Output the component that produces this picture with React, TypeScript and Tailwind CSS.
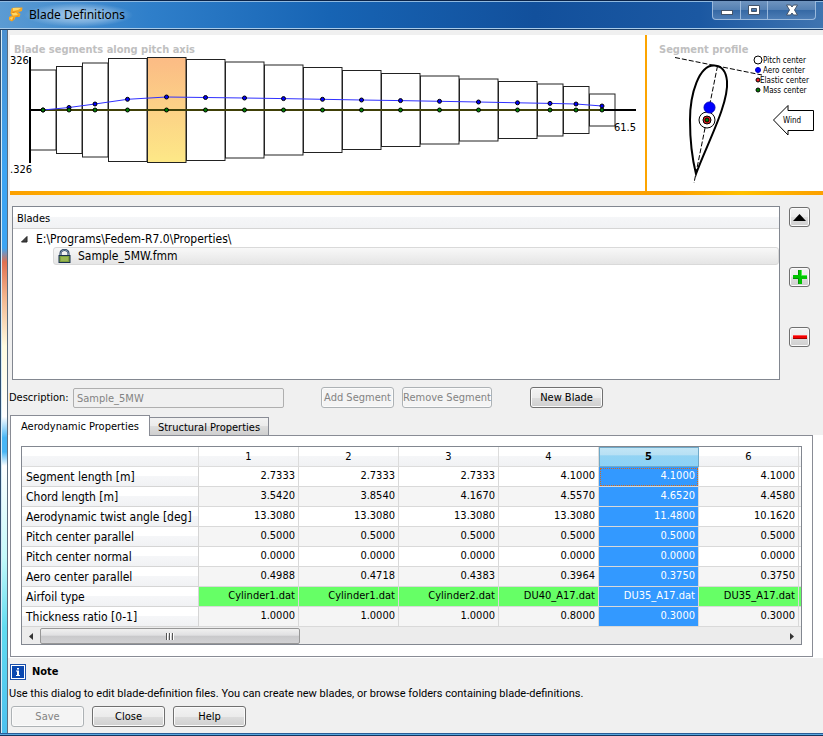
const segments: { x: number; w: number; top: number; bottom: number; aero: number }[] = [
  { x: 30, w: 26, top: 70, bottom: 150, aero: 110 },
  { x: 56, w: 26, top: 66.5, bottom: 153.5, aero: 107.5 },
  { x: 82, w: 26, top: 63, bottom: 157, aero: 104 },
  { x: 108, w: 39, top: 58.5, bottom: 161.5, aero: 99.3 },
  { x: 147, w: 39, top: 57.5, bottom: 162.5, aero: 97 },
  { x: 186, w: 39, top: 59.5, bottom: 160.5, aero: 97.5 },
  { x: 225, w: 39, top: 62, bottom: 158, aero: 98 },
  { x: 264, w: 39, top: 65, bottom: 155, aero: 98.6 },
  { x: 303, w: 39, top: 67.5, bottom: 152.5, aero: 99.3 },
  { x: 342, w: 39, top: 70.5, bottom: 149.5, aero: 100 },
  { x: 381, w: 39, top: 73.5, bottom: 146.5, aero: 100.6 },
  { x: 420, w: 39, top: 76, bottom: 144, aero: 101.3 },
  { x: 459, w: 39, top: 79, bottom: 141, aero: 102 },
  { x: 498, w: 39, top: 81.5, bottom: 138.5, aero: 102.8 },
  { x: 537, w: 26, top: 84, bottom: 136, aero: 103.4 },
  { x: 563, w: 26, top: 86.5, bottom: 133.5, aero: 104 },
  { x: 589, w: 26, top: 94, bottom: 126, aero: 106 },
];

const rows: { label: string; values: string[] }[] = [
  { label: "Segment length [m]", values: ["2.7333", "2.7333", "2.7333", "4.1000", "4.1000", "4.1000"] },
  { label: "Chord length [m]", values: ["3.5420", "3.8540", "4.1670", "4.5570", "4.6520", "4.4580"] },
  { label: "Aerodynamic twist angle [deg]", values: ["13.3080", "13.3080", "13.3080", "13.3080", "11.4800", "10.1620"] },
  { label: "Pitch center parallel", values: ["0.5000", "0.5000", "0.5000", "0.5000", "0.5000", "0.5000"] },
  { label: "Pitch center normal", values: ["0.0000", "0.0000", "0.0000", "0.0000", "0.0000", "0.0000"] },
  { label: "Aero center parallel", values: ["0.4988", "0.4718", "0.4383", "0.3964", "0.3750", "0.3750"] },
  { label: "Airfoil type", values: ["Cylinder1.dat", "Cylinder1.dat", "Cylinder2.dat", "DU40_A17.dat", "DU35_A17.dat", "DU35_A17.dat"] },
  { label: "Thickness ratio [0-1]", values: ["1.0000", "1.0000", "1.0000", "0.8000", "0.3000", "0.3000"] },
];

const buttonBase =
  "flex items-center justify-center rounded-[3px] border border-[#707070] bg-[linear-gradient(#f3f3f3,#ebebeb_50%,#dddddd_50%,#cfcfcf)] shadow-[inset_0_0_0_1px_#fbfbfb]";
const buttonDisabled =
  "flex items-center justify-center rounded-[3px] border border-[#adb2b5] bg-[#f4f4f4] text-[#838383] shadow-[inset_0_0_0_1px_#fbfbfb]";
const headFill = "bg-[linear-gradient(#ffffff,#ffffff_45%,#f5f6f8_50%,#f1f2f4)]";

function TitleBar() {
  return (
    <header className="flex h-[30px] items-start border-b border-[#1d3f66] border-t border-t-[#0a2348] bg-[linear-gradient(90deg,#5b9bd3,#2f7fca_18%,#1764b4_40%,#12509c_65%,#1b58a2_85%,#3f74b0)] shadow-[inset_0_1px_0_#8fb9e0,inset_0_-1px_0_#a9cbe9]">
      <svg viewBox="0 0 16 16" className="mt-[5px] ml-2 size-4" aria-hidden="true">
        <path d="M4 2L8 1.500L14.500 1.500L14 5L11 6L9.500 5.500L12.500 8L11.500 11L7.500 11L6.500 13.500L4 15.500L1 14L1 11L4 9.500L2.500 7.500L3 4Z" fill="#f5a623" />
        <path d="M5 2L13 2L10 4L5 5ZM3.500 7L8 6.500L10 9L5 9.500ZM1.500 12L5 11L4 14Z" fill="#ffd766" />
        <path d="M4 6L9 5.500L5 7ZM7 10.500L11 9.500L10 10.500ZM4 15L6 13V11.500Z" fill="#d97f10" />
      </svg>
      <h1 className="mt-[2px] bg-[radial-gradient(closest-side,#a9cdec,#8bb9e3c0_60%,#8bb9e300)] pr-2 pl-[5px] font-['Noto_Sans',sans-serif] text-[12px] leading-[24px]">
        Blade Definitions
      </h1>
      <div className="mr-[7px] ml-auto flex h-[19px] rounded-b-[4px] border border-t-0 border-[#9ab9dc] bg-[linear-gradient(#6f94bf,#5480b3_50%,#3568a4_50%,#4d7db5)]">
        <button aria-label="Minimize" className="flex w-7 items-center justify-center border-r border-[#9ab9dc]">
          <svg width="14" height="14" viewBox="0 0 14 14"><rect x="1.500" y="7.500" width="11" height="4" fill="#fff" stroke="#44546a" /></svg>
        </button>
        <button aria-label="Maximize" className="flex w-[27px] items-center justify-center border-r border-[#9ab9dc]">
          <svg width="14" height="12" viewBox="0 0 14 12"><path d="M1.500 1.500h11v9h-11z M4.500 4.500h5v3h-5z" fillRule="evenodd" fill="#fff" stroke="#44546a" /></svg>
        </button>
        <button aria-label="Close window" className="flex w-[47px] items-center justify-center">
          <svg width="14" height="12" viewBox="0 0 14 12"><path d="M1.500 1h4L7 3l1.500-2h4L9.500 6l3 5H8.500L7 9l-1.500 2h-4L4.500 6z" fill="#fff" stroke="#44546a" /></svg>
        </button>
      </div>
    </header>
  );
}

function BladeChart() {
  return (
    <svg width="635" height="156" viewBox="10 35 635 156" className="block" role="img" aria-label="Blade segments along pitch axis">
      <defs>
        <linearGradient id="selected" x1="0" y1="0" x2="0" y2="1">
          <stop offset="0" stopColor="#fbbb85" />
          <stop offset="1" stopColor="#fde887" />
        </linearGradient>
      </defs>
      <text x="14" y="53" fontSize="11" fontWeight="bold" fill="#c0c0c0">Blade segments along pitch axis</text>
      {segments.map((s, i) => (
        <rect key={s.x} x={s.x + 0.5} y={s.top} width={s.w - 0.5} height={s.bottom - s.top} fill={i === 4 ? "url(#selected)" : "none"} stroke="#222" />
      ))}
      <path d="M30 57V163" stroke="#000" strokeWidth="2" />
      <path d="M30 110H636" stroke="#000" strokeWidth="2" />
      <path d="M43 110H602" stroke="#404008" strokeWidth="2" />
      <polyline fill="none" stroke="#3030ff" points={segments.map((s) => `${s.x + s.w / 2},${s.aero}`).join(" ")} />
      {segments.map((s) => (
        <g key={s.x} stroke="#000">
          <circle cx={s.x + s.w / 2} cy={s.aero} r="2" fill="#0000ff" />
          <circle cx={s.x + s.w / 2} cy="110" r="2" fill="#008000" />
        </g>
      ))}
      <text x="10" y="64" fontSize="11">326</text>
      <text x="10" y="173" fontSize="11">.326</text>
      <text x="614" y="131" fontSize="11">61.5</text>
    </svg>
  );
}

function ProfileChart() {
  return (
    <svg width="176" height="156" viewBox="647 35 176 156" className="block" role="img" aria-label="Segment profile">
      <text x="659" y="53" fontSize="11" fontWeight="bold" fill="#c0c0c0">Segment profile</text>
      <g fill="none" stroke="#000">
        <path d="M675 57.500L762 75M717.500 66L694 183" strokeDasharray="5 2" />
        <path d="M714.500 65.500C699 64.500 690 94 690 120C690 139 692 158 696 174C706 146 729 104 727 81C726 71 722 66 714.500 65.500Z" strokeWidth="2" />
        <circle cx="707" cy="120" r="8" fill="#fff" />
        <circle cx="709.500" cy="107.500" r="5.500" fill="#0000ff" stroke="#0000c0" />
        <circle cx="707" cy="120" r="4" fill="#f02020" />
        <circle cx="707" cy="120" r="2" fill="#008000" />
        <circle cx="758" cy="60" r="4" fill="#fff" />
        <circle cx="758" cy="70" r="2.500" fill="#0000ff" stroke="#0000c0" />
        <circle cx="758" cy="80" r="2" fill="#f02020" />
        <circle cx="758" cy="90" r="2" fill="#008000" />
        <path d="M773.500 120L788 105.500V110.500H813.500V130.500H788V135Z" />
      </g>
      <g fontSize="8">
        <text x="763" y="63">Pitch center</text>
        <text x="763" y="73">Aero center</text>
        <text x="760" y="83">Elastic center</text>
        <text x="763" y="93">Mass center</text>
        <text x="783" y="123">Wind</text>
      </g>
    </svg>
  );
}

function BladeList() {
  return (
    <section className="flex gap-[9px] pt-[11px] pr-[13px] pl-1 text-[12px]">
      <div className="h-[174px] flex-1 border border-[#828790] bg-white">
        <h2 className={`h-[22px] border-b border-[#d5d5d5] px-1 text-[11px] leading-[24px] ${headFill}`}>Blades</h2>
        <ul role="tree" aria-label="Blades">
          <li role="treeitem" aria-expanded="true">
            <div className="flex h-[18px] items-center pt-0.5">
              <svg width="7" height="7" viewBox="0 0 7 7" className="mr-2 ml-2" aria-hidden="true"><path d="M6 0.500V6H0.500Z" fill="#444" stroke="#222" /></svg>
              E:\Programs\Fedem-R7.0\Properties\
            </div>
            <ul role="group">
              <li role="treeitem" aria-selected="true" className="ml-10 flex h-[18px] items-center gap-[7px] rounded-[3px] border border-[#d9d9d9] bg-[linear-gradient(#f8f8f8,#e5e5e5)] pl-1">
                <svg width="13" height="14" viewBox="0 0 13 14" aria-hidden="true">
                  <path d="M2.500 7V4.500Q2.500 1 6.500 1T10.500 4.500V7" fill="none" stroke="#17304f" strokeWidth="2" />
                  <path d="M2.500 7V4.500Q2.500 1 6.500 1T10.500 4.500V7" fill="none" stroke="#a9bfd2" strokeWidth="0.700" />
                  <rect x="1" y="6.500" width="11" height="7" fill="#7fa03f" stroke="#17304f" />
                  <path d="M3 9H10M3 11H10" stroke="#b4ce62" />
                </svg>
                Sample_5MW.fmm
              </li>
            </ul>
          </li>
        </ul>
      </div>
      <div className="flex flex-col gap-10 pt-px">
        <button aria-label="Move up" className={`h-5 w-[21px] ${buttonBase}`}>
          <svg width="13" height="7" viewBox="0 0 13 7"><path d="M0 7L6.500 0L13 7Z" /></svg>
        </button>
        <button aria-label="Add blade folder" className={`h-5 w-[21px] ${buttonBase}`}>
          <svg width="14" height="14" viewBox="0 0 14 14"><path d="M5 0H9V5H14V9H9V14H5V9H0V5H5Z" fill="#00c400" /><path d="M8.500 0V5.500H14" fill="none" stroke="#4cf04c" /><path d="M5.500 5V0M0 8.500H5.500V14" fill="none" stroke="#009400" /></svg>
        </button>
        <button aria-label="Remove blade folder" className={`h-5 w-[21px] ${buttonBase}`}>
          <svg width="14" height="4" viewBox="0 0 14 4"><rect width="14" height="4" fill="#f00000" /><path d="M0 3.500H14" stroke="#a00000" /><path d="M0 0.500H14" stroke="#ff5050" /></svg>
        </button>
      </div>
    </section>
  );
}

function PropertyTable() {
  return (
    <div className="border border-[#828790] bg-white">
      <table className="w-full table-fixed border-separate border-spacing-0">
        <colgroup>
          <col className="w-[177px]" />
          {[1, 2, 3, 4, 5, 6].map((n) => (
            <col key={n} className="w-[100px]" />
          ))}
          <col />
        </colgroup>
        <thead>
          <tr className="h-5">
            <td className={`border-r border-b border-[#dcdcdc] ${headFill}`} />
            {[1, 2, 3, 4, 5, 6].map((n) => (
              <th
                key={n}
                scope="col"
                className={
                  n === 5
                    ? "border-r border-b border-[#6fa9c8] bg-[linear-gradient(#c3e6f6,#b7e0f4_42%,#92d3f3_46%,#8dd2f6)] p-0 leading-[19px] font-bold shadow-[inset_1px_1px_0_#6fa9c8]"
                    : `border-r border-b border-[#dcdcdc] p-0 leading-[19px] font-normal ${headFill}`
                }
              >
                {n}
              </th>
            ))}
            <td className={`border-b border-[#dcdcdc] ${headFill}`} />
          </tr>
        </thead>
        <tbody>
          {rows.map((row, r) => {
            const airfoil = row.label === "Airfoil type";
            const fill = airfoil ? "bg-[#66ff66]" : r % 2 ? "bg-[#f5f5f5]" : "bg-white";
            return (
              <tr key={row.label} className="h-5">
                <th scope="row" className={`border-r border-b border-[#d5d5d5] p-0 pt-px pl-1 text-left text-[12px] font-normal leading-[18px] whitespace-nowrap ${headFill}`}>
                  {row.label}
                </th>
                {row.values.map((value, c) => (
                  <td
                    key={c}
                    className={`border-r border-b border-[#d9d9d9] p-0 pr-[3px] pb-0.5 text-right leading-[17px] ${c === 4 ? "bg-[#3399ff] text-white" : fill} ${
                      c === 4 && r === 0 ? "outline-1 -outline-offset-2 outline-dotted outline-[#d2691e]" : ""
                    }`}
                  >
                    {value}
                  </td>
                ))}
                <td className={`border-b border-[#d9d9d9] p-0 ${fill}`} />
              </tr>
            );
          })}
        </tbody>
      </table>
      <div className="flex h-[17px] bg-[#ececec] pt-px">
        <button aria-label="Scroll left" className="flex w-[18px] items-center justify-center">
          <svg width="4" height="7" viewBox="0 0 4 7"><path d="M4 0V7L0 3.500Z" fill="#333" /></svg>
        </button>
        <div className="flex-1">
          <div className="flex h-full w-[260px] items-center justify-center gap-px rounded-[2px] border border-[#979797] bg-[linear-gradient(#f0f0f0,#e0e0e2_45%,#c9c9cb_50%,#d2d2d4)]">
            <span className="h-[7px] w-0.5 border-r border-white bg-[#555]" />
            <span className="h-[7px] w-0.5 border-r border-white bg-[#555]" />
            <span className="h-[7px] w-0.5 border-r border-white bg-[#555]" />
          </div>
        </div>
        <button aria-label="Scroll right" className="flex w-[18px] items-center justify-center">
          <svg width="4" height="7" viewBox="0 0 4 7"><path d="M0 0V7L4 3.500Z" fill="#333" /></svg>
        </button>
      </div>
    </div>
  );
}

export default function App() {
  return (
    <div className="flex min-h-screen flex-col bg-[#0f4f98] font-['DejaVu_Sans_Condensed','Noto_Sans',sans-serif] text-[11px] text-black">
      <TitleBar />
      <div className="flex flex-1">
        <div className="w-2 border-r border-l border-r-[#5b6c7d] border-l-[#2f4f70] bg-[linear-gradient(#4a90d0,#3da5f3_20%,#3da5f3_31%,#e07050_33%,#f3b58d_38%,#fffbe0_45%,#ffffff_55%,#48b6f5_58%,#48b6f5_60%,#ffffff_62%,#c4fafa_75%,#62dcf0_85%,#4cc0ee)] shadow-[inset_1px_0_0_#d7ecf8]" />
        <main className="flex min-w-0 flex-1 flex-col bg-[#f0f0f0] pt-[5px]">
          <div className="ml-0.5 flex h-[156px] overflow-hidden bg-white">
            <div className="flex-1">
              <BladeChart />
            </div>
            <div className="border-l-2 border-[#fca400]">
              <ProfileChart />
            </div>
          </div>
          <div className="ml-0.5 h-1 bg-[linear-gradient(90deg,#fca000,#ffc000_20%,#ffc000_40%,#fca400_60%,#fca000_82%,#ffc000_90%,#fca000)]" />

          <BladeList />

          <div className="mt-[7px] flex h-[21px] items-center pl-px">
            <label htmlFor="description" className="w-16 pt-0.5">Description:</label>
            <input id="description" disabled defaultValue="Sample_5MW" className="h-5 w-[211px] rounded-[2px] border border-[#afafaf] bg-[#f0f0f0] px-[3px] pt-px text-[#838383]" />
            <button disabled className={`ml-[37px] h-[21px] w-[73px] pt-0.5 ${buttonDisabled}`}>Add Segment</button>
            <button disabled className={`ml-2 h-[21px] w-[90px] pt-0.5 whitespace-nowrap ${buttonDisabled}`}>Remove Segment</button>
            <button className={`ml-[38px] h-[21px] w-[73px] pt-0.5 ${buttonBase}`}>New Blade</button>
          </div>

          <div role="tablist" className="mt-[7px] ml-0.5 flex h-5 items-end">
            <button role="tab" aria-selected="true" className="z-10 -mb-px h-[21px] w-[140px] border border-b-0 border-[#898c95] bg-white pt-0.5">
              Aerodynamic Properties
            </button>
            <button role="tab" aria-selected="false" className="h-[18px] w-[119px] border border-b-0 border-l-0 border-[#898c95] bg-[linear-gradient(#f2f2f2,#ebebeb_50%,#dddddd_50%,#cfcfcf)] pt-0.5">
              Structural Properties
            </button>
          </div>
          <div className="bg-white pr-[10px] pb-px pl-0.5">
            <div role="tabpanel" className="border border-[#898c95] px-[10px] pt-[10px] pb-[11px]">
              <PropertyTable />
            </div>
          </div>

          <section className="pl-px">
            <div className="mt-[5px] flex h-[18px] items-center gap-[6px] pl-px">
              <svg width="16" height="16" viewBox="0 0 16 16" aria-hidden="true">
                <rect x="0.500" y="0.500" width="15" height="15" fill="#fff" stroke="#1b4fa8" />
                <rect x="2" y="2" width="12" height="12" fill="#0a48b0" />
                <path d="M7 4H9V5.500H7ZM6 6.500H9V11H10V12H6V11H7V7.500H6Z" fill="#fff" />
              </svg>
              <h2 className="font-bold">Note</h2>
            </div>
            <p className="mt-[6px] font-['Roboto',sans-serif] leading-[14px]">
              Use this dialog to edit blade-definition files. You can create new blades, or browse folders containing blade-definitions.
            </p>
            <div className="mt-[5px] flex gap-2 pl-0.5">
              <button disabled className={`h-[21px] w-[73px] pt-0.5 ${buttonDisabled}`}>Save</button>
              <button className={`h-[21px] w-[73px] pt-0.5 ${buttonBase}`}>Close</button>
              <button className={`h-[21px] w-[73px] pt-0.5 ${buttonBase}`}>Help</button>
            </div>
          </section>
        </main>
      </div>
      <footer className="h-[3px] border-t border-b border-t-[#2a5f98] border-b-[#12355f] bg-[#5aa8e0]" />
    </div>
  );
}
